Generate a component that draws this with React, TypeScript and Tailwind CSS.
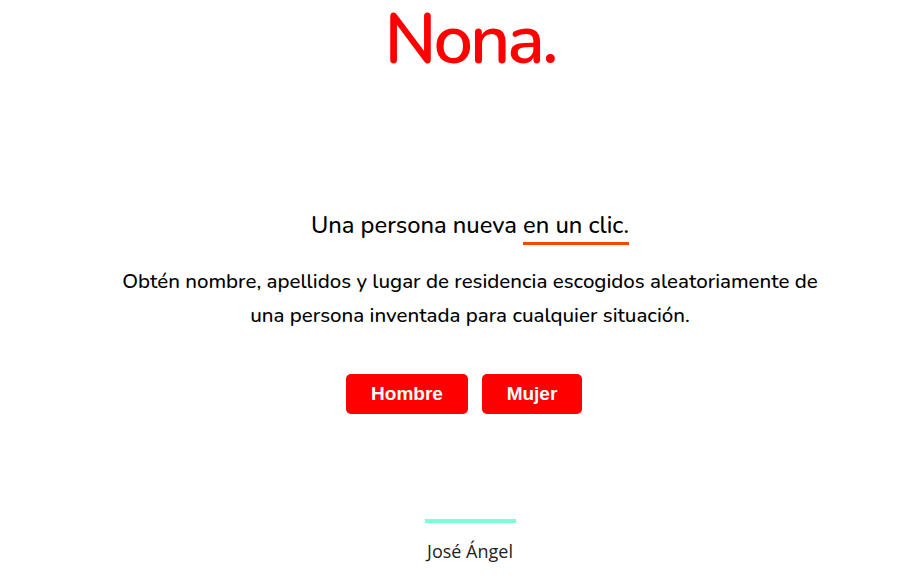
import React from "react";

const App = () => {
  return (
    <div className="w-[905px] h-[580px] bg-white overflow-hidden">
      <div className="w-[940px] flex flex-col items-center font-['Nunito','Noto_Sans',sans-serif] text-black">
        <h1 className="text-[70px] font-semibold leading-[80px] text-[#ff0000] tracking-[-3px]">Nona.</h1>
        <h2 className="mt-[130px] text-[23.7px] font-medium leading-[30px]">
          Una persona nueva{" "}
          <span className="border-b-[3px] border-[#ff4500] pb-[1px]">en un clic.</span>
        </h2>
        <p className="mt-[24px] text-[20.5px] font-medium leading-[34px] text-center w-[720px]">
          Obtén nombre, apellidos y lugar de residencia escogidos aleatoriamente de una persona inventada para cualquier situación.
        </p>
        <div className="mt-[42px] mr-[12px] flex gap-[14px] font-['Liberation_Sans',Arial,sans-serif] font-bold text-white text-[19px]">
          <button className="w-[122px] h-[40px] bg-[#ff0000] rounded-[5px]">Hombre</button>
          <button className="w-[100px] h-[40px] bg-[#ff0000] rounded-[5px]">Mujer</button>
        </div>
        <div className="mt-[105px] w-[91px] h-[4px] bg-[#7fffd4]"></div>
        <div className="mt-[15px] text-[18px] font-['Open_Sans',sans-serif] text-[#222]">José Ángel</div>
      </div>
    </div>
  );
};

export default App;
